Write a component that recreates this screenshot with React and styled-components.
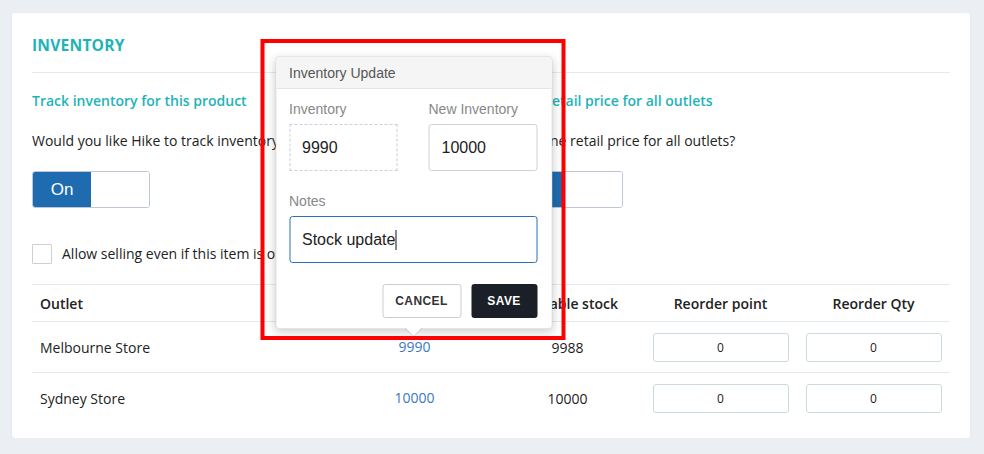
import React from "react";
import styled, { createGlobalStyle } from "styled-components";

const GlobalStyle = createGlobalStyle`
  * { box-sizing: border-box; }
  html, body { margin: 0; background: #ebeef3; }
  body {
    padding: 13px 14px 0 12px;
    font-family: "Open Sans", "Liberation Sans", sans-serif;
    color: #222;
  }
`;

const Card = styled.section`
  background: #fff;
  border-radius: 3px;
  box-shadow: 0 1px 3px rgba(0, 0, 0, 0.06);
  padding: 22px 20px 15px;
`;

const Title = styled.h2`
  margin: 0;
  padding-bottom: 17px;
  border-bottom: 1px solid #e6e9ee;
  font-size: 15.6px;
  line-height: 20px;
  font-weight: 700;
  color: #1eb4b7;
  letter-spacing: 0.2px;
`;

const Settings = styled.div`
  display: grid;
  grid-template-columns: 1fr 1fr;
  column-gap: 28px;
  margin-top: 18px;
`;

const Setting = styled.div`
  display: flex;
  flex-direction: column;
  align-items: flex-start;
`;

const SettingTitle = styled.h3`
  margin: 0;
  font-size: 14px;
  line-height: 20px;
  font-weight: 600;
  color: #1eb4b7;
`;

const Question = styled.p`
  margin: 20px 0 0;
  font-size: 14px;
  line-height: 20px;
  white-space: nowrap;
`;

const Toggle = styled.div`
  margin-top: 20px;
  display: flex;
  width: 118px;
  height: 37px;
  border: 1px solid #bcc6d6;
  border-radius: 3px;
  overflow: hidden;
`;

const ToggleHalf = styled.span`
  flex: 1;
  display: flex;
  align-items: center;
  justify-content: center;
  background: ${(p) => (p.$active ? "#1f6bb0" : "#fff")};
  color: #fff;
  font-family: "Liberation Sans", Arial, sans-serif;
  font-size: 17px;
`;

const CheckRow = styled.label`
  margin-top: 36px;
  display: flex;
  align-items: center;
  gap: 10px;
  font-size: 14px;
  line-height: 20px;
`;

const Box = styled.span`
  width: 20px;
  height: 20px;
  border: 1px solid #cfcfcf;
  border-radius: 1px;
  background: #fff;
`;

const Table = styled.div`
  margin-top: 20px;
`;

const Row = styled.div`
  display: grid;
  grid-template-columns: 306px repeat(4, 153px);
  align-items: center;
  height: ${(p) => (p.$head ? "37px" : "51px")};
  border-top: 1px solid #e4e8ee;
  font-size: 14px;
  font-weight: ${(p) => (p.$head ? 600 : 400)};
`;

const Cell = styled.div`
  padding: 0 8px;
  text-align: ${(p) => (p.$left ? "left" : "center")};
  position: relative;
`;

const StockLink = styled.span`
  position: relative;
  display: inline-block;
  line-height: 20px;
  color: #3a78c3;
`;

const QtyInput = styled.input`
  width: 136px;
  height: 29px;
  border: 1px solid #ccdbdb;
  border-radius: 3px;
  text-align: center;
  font-family: "Open Sans", sans-serif;
  font-size: 12px;
  color: #222;
  outline: none;
`;

const Popover = styled.div`
  position: absolute;
  z-index: 5;
  bottom: calc(100% + 8px);
  left: 50%;
  transform: translateX(calc(-50% - 1px));
  width: 277px;
  background: #fff;
  border: 1px solid rgba(0, 0, 0, 0.1);
  border-radius: 4px;
  box-shadow: 0 3px 10px rgba(0, 0, 0, 0.2);
  font-family: "Liberation Sans", Arial, sans-serif;
  font-weight: 400;
  text-align: left;
  color: #222;

  &::before,
  &::after {
    content: "";
    position: absolute;
    left: 50%;
    transform: translateX(-50%);
    border-style: solid;
    border-color: transparent;
  }
  &::before {
    top: 100%;
    border-width: 9px 9px 0;
    border-top-color: rgba(0, 0, 0, 0.15);
  }
  &::after {
    top: 100%;
    border-width: 8px 8px 0;
    border-top-color: #fff;
  }
`;

const Highlight = styled.div`
  position: absolute;
  top: -18px;
  left: -16px;
  right: -14px;
  bottom: -12px;
  border: 4px solid #ff0000;
  pointer-events: none;
`;

const PopHeader = styled.div`
  height: 32px;
  padding: 0 13px;
  background: #f5f5f5;
  border-bottom: 1px solid #e4e4e4;
  border-radius: 4px 4px 0 0;
  font-size: 14px;
  line-height: 33px;
  color: #555;
`;

const PopBody = styled.div`
  padding: 12px 14px 10px 13px;
`;

const Fields = styled.div`
  display: grid;
  grid-template-columns: 1fr 1fr;
  column-gap: 31px;
`;

const Field = styled.div`
  display: flex;
  flex-direction: column;
  gap: 7px;
  margin-top: ${(p) => (p.$spaced ? "22px" : "0")};
`;

const Label = styled.span`
  font-size: 14px;
  line-height: 16px;
  color: #888;
`;

const Value = styled.div`
  display: flex;
  align-items: center;
  height: 47px;
  padding: 0 12px;
  font-size: 16px;
  color: #222;
  border-radius: ${(p) => (p.$variant === "dashed" ? "0" : "3px")};
  border: 1px
    ${(p) =>
      p.$variant === "dashed"
        ? "dashed #c8d0d8"
        : p.$variant === "focus"
        ? "solid #2c6fb3"
        : "solid #ccd3d9"};
`;

const Caret = styled.span`
  width: 1px;
  height: 20px;
  background: #111;
`;

const Actions = styled.div`
  display: flex;
  justify-content: flex-end;
  gap: 10px;
  margin-top: 21px;
`;

const Button = styled.button`
  height: 34px;
  width: ${(p) => (p.$primary ? "66px" : "79px")};
  border-radius: 3px;
  border: ${(p) => (p.$primary ? "none" : "1px solid #cccccc")};
  background: ${(p) => (p.$primary ? "#1b1f27" : "#fff")};
  color: ${(p) => (p.$primary ? "#fff" : "#333")};
  font-family: "Liberation Sans", Arial, sans-serif;
  font-size: 12px;
  font-weight: 700;
  letter-spacing: 0.4px;
  padding: 0;
`;

const outlets = [
  { name: "Melbourne Store", stock: "9990", available: "9988", editing: true },
  { name: "Sydney Store", stock: "10000", available: "10000" },
];

const InventoryPopover = () => (
  <Popover>
    <Highlight />
    <PopHeader>Inventory Update</PopHeader>
    <PopBody>
      <Fields>
        <Field>
          <Label>Inventory</Label>
          <Value $variant="dashed">9990</Value>
        </Field>
        <Field>
          <Label>New Inventory</Label>
          <Value>10000</Value>
        </Field>
      </Fields>
      <Field $spaced>
        <Label>Notes</Label>
        <Value $variant="focus">
          Stock update
          <Caret />
        </Value>
      </Field>
      <Actions>
        <Button>CANCEL</Button>
        <Button $primary>SAVE</Button>
      </Actions>
    </PopBody>
  </Popover>
);

export default function App() {
  return (
    <>
      <GlobalStyle />
      <Card>
        <Title>INVENTORY</Title>
        <Settings>
          <Setting>
            <SettingTitle>Track inventory for this product</SettingTitle>
            <Question>Would you like Hike to track inventory for this product?</Question>
            <Toggle>
              <ToggleHalf $active>On</ToggleHalf>
              <ToggleHalf />
            </Toggle>
          </Setting>
          <Setting>
            <SettingTitle>Same retail price for all outlets</SettingTitle>
            <Question>Have one retail price for all outlets?</Question>
            <Toggle>
              <ToggleHalf $active>On</ToggleHalf>
              <ToggleHalf />
            </Toggle>
          </Setting>
        </Settings>
        <CheckRow>
          <Box />
          Allow selling even if this item is out of stock
        </CheckRow>
        <Table>
          <Row $head>
            <Cell $left>Outlet</Cell>
            <Cell>Inventory</Cell>
            <Cell>Available stock</Cell>
            <Cell>Reorder point</Cell>
            <Cell>Reorder Qty</Cell>
          </Row>
          {outlets.map((o) => (
            <Row key={o.name}>
              <Cell $left>{o.name}</Cell>
              <Cell>
                <StockLink>
                  {o.stock}
                  {o.editing && <InventoryPopover />}
                </StockLink>
              </Cell>
              <Cell>{o.available}</Cell>
              <Cell>
                <QtyInput readOnly value="0" />
              </Cell>
              <Cell>
                <QtyInput readOnly value="0" />
              </Cell>
            </Row>
          ))}
        </Table>
      </Card>
    </>
  );
}
